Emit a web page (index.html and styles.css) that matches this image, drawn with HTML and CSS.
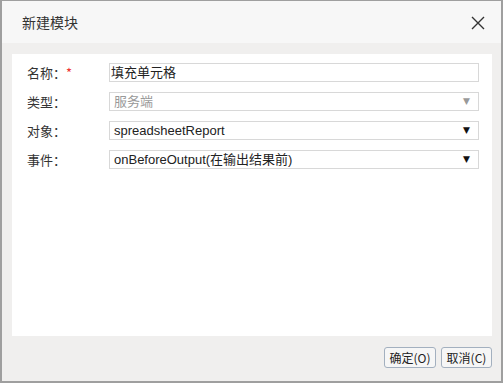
FILE: index.html
```html
<!DOCTYPE html>
<html lang="zh">
<head>
<meta charset="utf-8">
<title>新建模块</title>
<link rel="stylesheet" href="styles.css">
</head>
<body>
<div class="dialog">
  <div class="header">
    <span class="title">新建模块</span>
    <svg class="close" width="14" height="14" viewBox="0 0 14 14"><path d="M1 1L13 13M13 1L1 13" stroke="#333" stroke-width="1.4" fill="none"/></svg>
  </div>
  <div class="body">
    <div class="panel">
      <div class="row">
        <span class="label">名称：<span class="req">*</span></span>
        <div class="field input">填充单元格</div>
      </div>
      <div class="row">
        <span class="label">类型：</span>
        <div class="field select disabled"><span>服务端</span><span class="arrow">▼</span></div>
      </div>
      <div class="row">
        <span class="label">对象：</span>
        <div class="field select"><span>spreadsheetReport</span><span class="arrow">▼</span></div>
      </div>
      <div class="row">
        <span class="label">事件：</span>
        <div class="field select"><span>onBeforeOutput(在输出结果前)</span><span class="arrow">▼</span></div>
      </div>
    </div>
    <div class="footer">
      <button class="btn">确定(O)</button>
      <button class="btn">取消(C)</button>
    </div>
  </div>
</div>
</body>
</html>
```

FILE: styles.css
```css
html, body {
  margin: 0;
  padding: 0;
}
body {
  width: 503px;
  height: 383px;
  background: #9f9f9f;
  font-family: "Liberation Sans", Arial, "Noto Sans CJK SC", sans-serif;
  color: #333;
  overflow: hidden;
}
.dialog {
  margin: 1px 2px 0 2px;
  width: 499px;
  height: 380px;
  display: flex;
  flex-direction: column;
  background: #f0efee;
}
.header {
  height: 42px;
  flex: none;
  background: #f7f7f7;
  display: flex;
  align-items: center;
  justify-content: space-between;
  padding: 0 16px 0 20px;
}
.title {
  font-family: "Noto Sans CJK SC", sans-serif;
  font-size: 14px;
  color: #333;
}
.close {
  display: block;
  margin-top: 1px;
}
.body {
  flex: 1;
  display: flex;
  flex-direction: column;
  padding: 11px 9px 0 10px;
}
.panel {
  height: 282px;
  background: #fff;
  padding: 9px 13px 0 15px;
  box-sizing: border-box;
  display: flex;
  flex-direction: column;
  gap: 10px;
}
.row {
  display: flex;
  align-items: center;
  height: 19px;
}
.label {
  width: 82px;
  flex: none;
  font-family: "Noto Sans CJK SC", sans-serif;
  font-size: 13px;
  color: #333;
}
.req {
  color: #e33;
}
.field {
  flex: 1;
  height: 19px;
  box-sizing: border-box;
  border: 1px solid #d8d8d8;
  font-size: 13px;
  line-height: 17px;
  color: #222;
  font-family: "Liberation Sans", Arial, "Noto Sans CJK SC", sans-serif;
  white-space: nowrap;
}
.input {
  padding-left: 1px;
}
.select {
  display: flex;
  justify-content: space-between;
  padding: 0 8px 0 4px;
}
.arrow {
  font-size: 9px;
  color: #111;
  font-family: "DejaVu Sans", sans-serif;
}
.disabled {
  color: #999;
}
.disabled .arrow {
  color: #999;
}
.footer {
  display: flex;
  justify-content: flex-end;
  gap: 5px;
  padding-top: 11px;
}
.btn {
  height: 21px;
  padding: 0 4px;
  border: 1px solid #a3b0bf;
  border-radius: 3px;
  background: #f6f6f6;
  font-family: "Noto Sans CJK SC", sans-serif;
  font-size: 12px;
  color: #222;
  line-height: 19px;
  margin: 0;
}
.btn:first-child {
  width: 52px;
}
.btn:last-child {
  width: 51px;
}
```
